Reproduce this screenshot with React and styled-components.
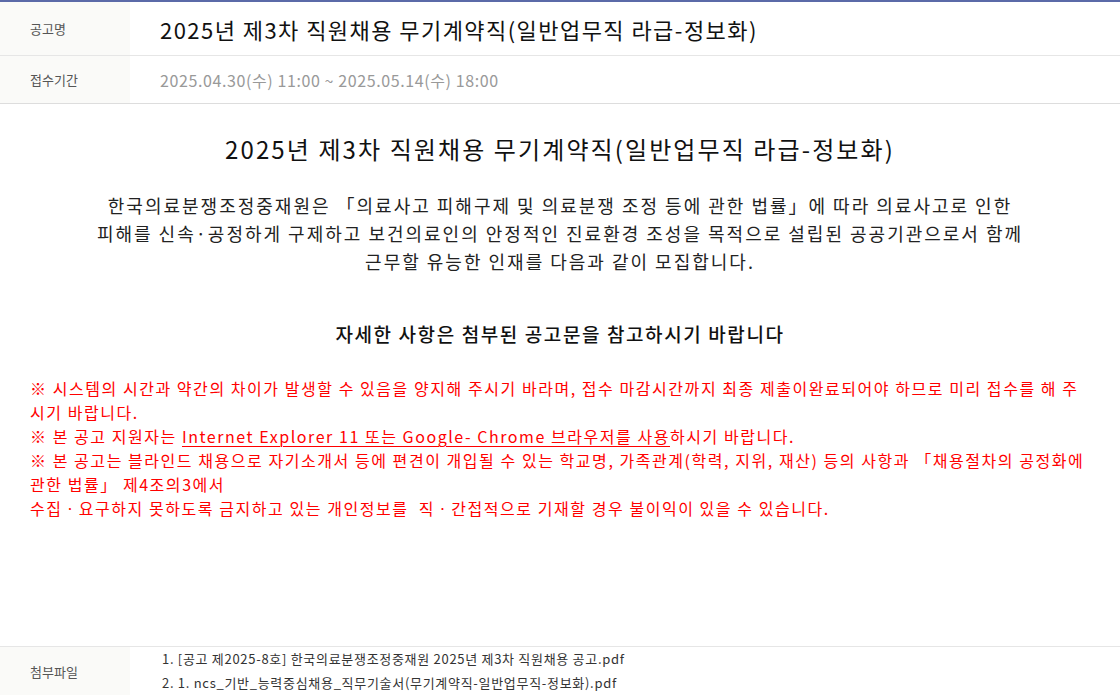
import styled, { createGlobalStyle } from 'styled-components';

const GlobalStyle = createGlobalStyle`
  html, body {
    margin: 0;
    padding: 0;
    background: #fff;
  }
  body {
    font-family: 'Noto Sans CJK KR', 'Noto Sans', sans-serif;
    color: #222;
  }
`;

const files = [
  '1. [공고 제2025-8호] 한국의료분쟁조정중재원 2025년 제3차 직원채용 공고.pdf',
  '2. 1. ncs_기반_능력중심채용_직무기술서(무기계약직-일반업무직-정보화).pdf',
];

const App = () => {
  return (
    <>
      <GlobalStyle />
      <Board>
        <Row $height={53}>
          <Label>공고명</Label>
          <Value $size={22} $color="#111" $spacing={1.45}>
            2025년 제3차 직원채용 무기계약직(일반업무직 라급-정보화)
          </Value>
        </Row>
        <Row $height={47}>
          <Label>접수기간</Label>
          <Value $size={16} $color="#999" $spacing={0.6}>
            2025.04.30(수) 11:00 ~ 2025.05.14(수) 18:00
          </Value>
        </Row>
        <Content>
          <Title>2025년 제3차 직원채용 무기계약직(일반업무직 라급-정보화)</Title>
          <Intro>
            한국의료분쟁조정중재원은 「의료사고 피해구제 및 의료분쟁 조정 등에 관한 법률」에 따라 의료사고로 인한
            <br />
            피해를 신속·공정하게 구제하고 보건의료인의 안정적인 진료환경 조성을 목적으로 설립된 공공기관으로서 함께
            <br />
            근무할 유능한 인재를 다음과 같이 모집합니다.
          </Intro>
          <Notice>자세한 사항은 첨부된 공고문을 참고하시기 바랍니다</Notice>
          <Notes>
            <p>
              ※ 시스템의 시간과 약간의 차이가 발생할 수 있음을 양지해 주시기 바라며, 접수 마감시간까지 최종 제출이완료되어야 하므로 미리 접수를 해 주시기 바랍니다.
            </p>
            <p>
              ※ 본 공고 지원자는 <u>Internet Explorer 11 또는 Google- Chrome 브라우저를 사용</u>하시기 바랍니다.
            </p>
            <p>
              ※ 본 공고는 블라인드 채용으로 자기소개서 등에 편견이 개입될 수 있는 학교명, 가족관계(학력, 지위, 재산) 등의 사항과 「채용절차의 공정화에 관한 법률」 제4조의3에서
            </p>
            <p>수집ㆍ요구하지 못하도록 금지하고 있는 개인정보를 &nbsp;직ㆍ간접적으로 기재할 경우 불이익이 있을 수 있습니다.</p>
          </Notes>
        </Content>
        <Row $height={46} $top>
          <Label>첨부파일</Label>
          <FileList>
            {files.map((f) => (
              <li key={f}>{f}</li>
            ))}
          </FileList>
        </Row>
      </Board>
    </>
  );
};

const Board = styled.div`
  border-top: 2px solid #5b6aa8;
  display: flex;
  flex-direction: column;
  height: 693px;
  border-bottom: 1px solid #ddd;
`;

const Row = styled.div`
  display: grid;
  grid-template-columns: 130px 1fr;
  min-height: ${(p) => p.$height}px;
  border-bottom: 1px solid #e6e6e6;
  ${(p) => p.$top && 'border-top: 1px solid #e6e6e6; border-bottom: none;'}
`;

const Label = styled.div`
  background: #fafaf8;
  display: flex;
  align-items: center;
  padding-left: 30px;
  font-size: 13px;
  color: #555;
`;

const Value = styled.div`
  display: flex;
  align-items: center;
  padding-left: 30px;
  font-size: ${(p) => p.$size}px;
  color: ${(p) => p.$color};
  letter-spacing: ${(p) => p.$spacing}px;
`;

const Content = styled.div`
  flex: 1;
  padding: 27px 30px 0;
  display: flex;
  flex-direction: column;
  align-items: center;
  border-top: 1px solid #ddd;
  margin-top: -1px;
`;

const Title = styled.h2`
  margin: 0;
  font-size: 24px;
  font-weight: 400;
  color: #111;
  line-height: 36px;
  letter-spacing: 2.1px;
`;

const Intro = styled.p`
  margin: 24px 0 0;
  font-size: 18px;
  line-height: 28px;
  color: #222;
  text-align: center;
  letter-spacing: 2px;
`;

const Notice = styled.p`
  margin: 45px 0 0;
  font-size: 19px;
  font-weight: 500;
  line-height: 28px;
  color: #111;
  letter-spacing: 1.6px;
`;

const Notes = styled.div`
  align-self: stretch;
  margin-top: 28px;
  color: #ff0000;
  font-size: 16px;
  line-height: 24px;
  letter-spacing: 1.55px;
  p {
    margin: 0;
  }
  u {
    text-decoration-thickness: 1px;
    text-underline-offset: 3px;
  }
`;

const FileList = styled.ul`
  list-style: none;
  margin: 0;
  padding: 0 0 0 32px;
  display: flex;
  flex-direction: column;
  justify-content: center;
  font-size: 13px;
  line-height: 24px;
  color: #333;
  letter-spacing: 0.7px;
`;

export default App;
